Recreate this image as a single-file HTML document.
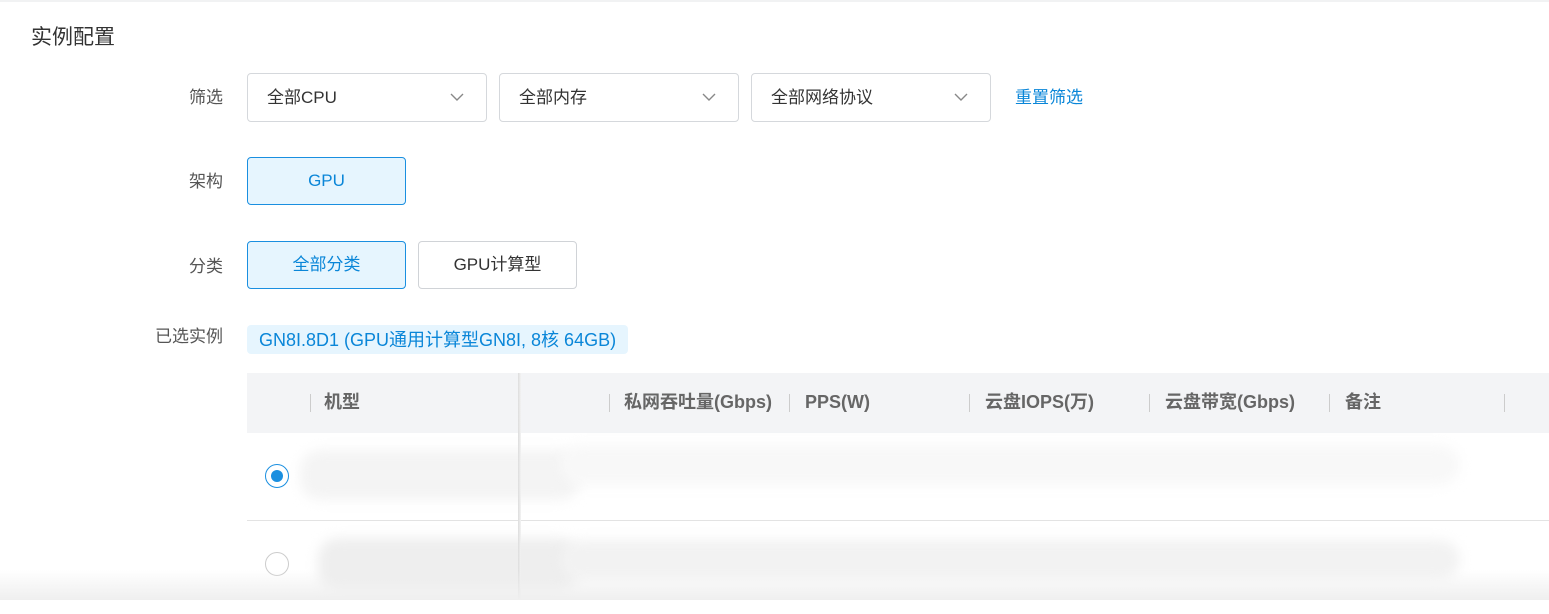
<!DOCTYPE html>
<html><head><meta charset="utf-8"><style>
*{box-sizing:border-box;margin:0;padding:0}
body{width:1549px;height:614px;background:#fff;font-family:"Liberation Sans","Noto Sans CJK SC",sans-serif;position:relative;overflow:hidden;color:#333}
.a{position:absolute}
.lbl{font-size:17px;line-height:20px;color:#555;text-align:right;width:100px;left:123px}
.sel{height:49px;border:1px solid #d5d8dc;border-radius:4px;font-size:17px;line-height:20px;color:#333;padding:14px 0 0 19px}
.sel svg{position:absolute;right:22px;top:19px}
.btn{height:48px;border:1px solid #d0d3d7;border-radius:4px;font-size:17px;text-align:center;line-height:46px;color:#333}
.on{border-color:#1a8fe0;background:#e6f5fe;color:#0a86d8}
.th{font-size:18px;line-height:20px;font-weight:bold;color:#666;top:392px;white-space:nowrap}
.sep{width:1px;height:18px;background:#ccc;top:394px}
.blur{filter:blur(6px);background:#ececec;border-radius:20px}
</style></head><body>
<div class="a" style="top:0;left:0;width:1549px;height:2px;background:#f1f2f3"></div>
<div class="a" style="left:31px;top:26px;font-size:21px;line-height:24px;color:#333">实例配置</div>

<div class="a lbl" style="top:88px">筛选</div>
<div class="a sel" style="left:247px;top:73px;width:240px">全部CPU<svg width="14" height="9" viewBox="0 0 14 9"><path d="M1 1l6 6 6-6" fill="none" stroke="#888" stroke-width="1.4"/></svg></div>
<div class="a sel" style="left:499px;top:73px;width:240px">全部内存<svg width="14" height="9" viewBox="0 0 14 9"><path d="M1 1l6 6 6-6" fill="none" stroke="#888" stroke-width="1.4"/></svg></div>
<div class="a sel" style="left:751px;top:73px;width:240px">全部网络协议<svg width="14" height="9" viewBox="0 0 14 9"><path d="M1 1l6 6 6-6" fill="none" stroke="#888" stroke-width="1.4"/></svg></div>
<div class="a" style="left:1015px;top:88px;font-size:17px;line-height:20px;color:#0a86d8">重置筛选</div>

<div class="a lbl" style="top:172px">架构</div>
<div class="a btn on" style="left:247px;top:157px;width:159px">GPU</div>

<div class="a lbl" style="top:257px">分类</div>
<div class="a btn on" style="left:247px;top:241px;width:159px">全部分类</div>
<div class="a btn" style="left:418px;top:241px;width:159px">GPU计算型</div>

<div class="a lbl" style="top:327px">已选实例</div>
<div class="a" style="left:247px;top:325px;width:381px;height:29px;background:#e6f5fe;border-radius:4px;font-size:18px;line-height:20px;color:#0a86d8;padding:5px 0 0 12px;white-space:nowrap">GN8I.8D1 (GPU通用计算型GN8I, 8核 64GB)</div>

<div class="a" style="left:247px;top:373px;width:1302px;height:60px;background:#f3f4f6"></div>
<div class="a sep" style="left:310px"></div><div class="a th" style="left:324px">机型</div>
<div class="a sep" style="left:609px"></div><div class="a th" style="left:624px">私网吞吐量(Gbps)</div>
<div class="a sep" style="left:789px"></div><div class="a th" style="left:805px">PPS(W)</div>
<div class="a sep" style="left:969px"></div><div class="a th" style="left:985px">云盘IOPS(万)</div>
<div class="a sep" style="left:1149px"></div><div class="a th" style="left:1165px">云盘带宽(Gbps)</div>
<div class="a sep" style="left:1329px"></div><div class="a th" style="left:1345px">备注</div>
<div class="a sep" style="left:1504px"></div>

<div class="a blur" style="left:300px;top:450px;width:280px;height:50px;background:#f4f4f4"></div>
<div class="a blur" style="left:560px;top:445px;width:900px;height:40px;background:#f8f8f8"></div>
<div class="a blur" style="left:318px;top:538px;width:260px;height:54px;background:#eeeeee"></div>
<div class="a blur" style="left:560px;top:540px;width:900px;height:40px;background:#f2f2f2"></div>
<div class="a" style="left:247px;top:520px;width:1302px;height:1px;background:#e3e3e3"></div>

<div class="a" style="left:265px;top:464px;width:24px;height:24px;border:1.5px solid #1a8fe0;border-radius:50%"></div>
<div class="a" style="left:271px;top:470px;width:12px;height:12px;background:#1a8fe0;border-radius:50%"></div>
<div class="a" style="left:265px;top:552px;width:24px;height:24px;border:1px solid #ccc;border-radius:50%"></div>

<div class="a" style="left:518px;top:373px;width:3px;height:227px;background:linear-gradient(90deg,#ddd,#f3f3f3)"></div>
<div class="a" style="left:0;top:570px;width:1549px;height:30px;background:linear-gradient(180deg,rgba(240,240,240,0),#efefef)"></div>
<div class="a" style="left:0;top:600px;width:1549px;height:14px;background:#fff"></div>
</body></html>
